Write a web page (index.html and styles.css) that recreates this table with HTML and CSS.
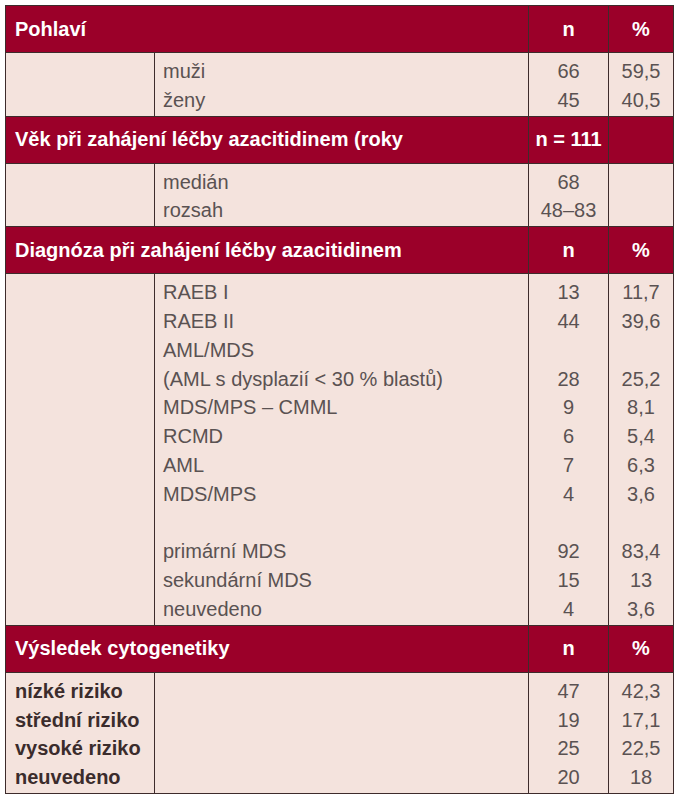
FILE: index.html
```html
<!DOCTYPE html>
<html lang="cs">
<head>
<meta charset="utf-8">
<title>Tabulka</title>
<link rel="stylesheet" href="styles.css">
</head>
<body>
<table class="tbl">
  <colgroup>
    <col class="c1"><col class="c2"><col class="c3"><col class="c4">
  </colgroup>
  <tr class="head">
    <th colspan="2" class="title">Pohlaví</th>
    <th class="num">n</th>
    <th class="num">%</th>
  </tr>
  <tr class="data">
    <td></td>
    <td>muži<br>ženy</td>
    <td class="num">66<br>45</td>
    <td class="num">59,5<br>40,5</td>
  </tr>
  <tr class="head">
    <th colspan="2" class="title">Věk při zahájení léčby azacitidinem (roky</th>
    <th class="num">n = 111</th>
    <th></th>
  </tr>
  <tr class="data">
    <td></td>
    <td>medián<br>rozsah</td>
    <td class="num">68<br>48–83</td>
    <td></td>
  </tr>
  <tr class="head">
    <th colspan="2" class="title">Diagnóza při zahájení léčby azacitidinem</th>
    <th class="num">n</th>
    <th class="num">%</th>
  </tr>
  <tr class="data">
    <td></td>
    <td>RAEB I<br>RAEB II<br>AML/MDS<br>(AML s dysplazií &lt; 30 % blastů)<br>MDS/MPS – CMML<br>RCMD<br>AML<br>MDS/MPS<br>&nbsp;<br>primární MDS<br>sekundární MDS<br>neuvedeno</td>
    <td class="num">13<br>44<br>&nbsp;<br>28<br>9<br>6<br>7<br>4<br>&nbsp;<br>92<br>15<br>4</td>
    <td class="num">11,7<br>39,6<br>&nbsp;<br>25,2<br>8,1<br>5,4<br>6,3<br>3,6<br>&nbsp;<br>83,4<br>13<br>3,6</td>
  </tr>
  <tr class="head">
    <th colspan="2" class="title">Výsledek cytogenetiky</th>
    <th class="num">n</th>
    <th class="num">%</th>
  </tr>
  <tr class="data">
    <td class="strong">nízké riziko<br>střední riziko<br>vysoké riziko<br>neuvedeno</td>
    <td></td>
    <td class="num">47<br>19<br>25<br>20</td>
    <td class="num">42,3<br>17,1<br>22,5<br>18</td>
  </tr>
</table>
</body>
</html>
```

FILE: styles.css
```css
html, body {
  margin: 0;
  padding: 0;
  background: #ffffff;
}
body {
  padding: 5px 0 0 5px;
  font-family: "Liberation Sans", Arial, sans-serif;
  font-size: 20px;
}
.tbl {
  border-collapse: collapse;
  table-layout: fixed;
  width: 669px;
  border: 1px solid #3d2b2b;
}
.c1 { width: 149px; }
.c2 { width: 374px; }
.c3 { width: 80px; }
.c4 { width: 65px; }

.tbl th, .tbl td {
  border: 1px solid #3d2b2b;
  padding: 0;
}
.head th {
  background: #9b0029;
  color: #ffffff;
  font-weight: bold;
  height: 46px;
  vertical-align: middle;
  text-align: left;
}
.head th.title {
  padding-left: 9px;
  white-space: nowrap;
}
.head th.num {
  text-align: center;
}
.data td {
  background: #f4e3dd;
  color: #5a5252;
  line-height: 28.8px;
  padding: 4px 0 1px 8px;
  vertical-align: top;
  white-space: nowrap;
}
.data td.num {
  text-align: center;
  padding-left: 0;
}
.data td.strong {
  font-weight: bold;
  color: #3b2c2c;
  padding-left: 9px;
}
```
